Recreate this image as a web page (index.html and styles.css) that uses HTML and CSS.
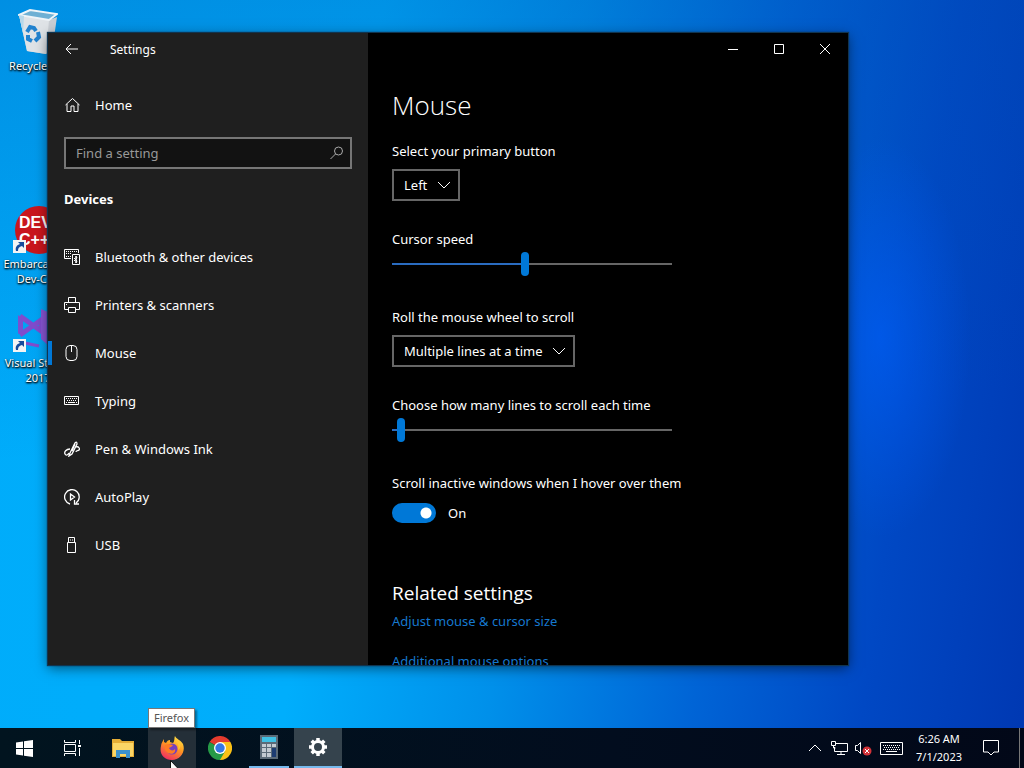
FILE: index.html
```html
<!DOCTYPE html>
<html lang="en">
<head>
<meta charset="utf-8">
<title>Settings</title>
<link rel="stylesheet" href="styles.css">
</head>
<body>
<div class="desktop">
  <div class="workspace">
    <a class="shortcut shortcut-bin" href="#bin">
      <svg width="40" height="46" viewBox="0 0 40 46"><path d="M1 7 9 43 28 46 34 43 39 9 31 12Z" fill="#c9ced4"/><path d="M1 7 31 12 28 46 9 43Z" fill="#dfe3e7"/><path d="M1 7 12 2 39 6 31 12Z" fill="#6eb0d4" stroke="#eef4f8" stroke-width="2"/><path d="m1 7 4 18 1-17Z" fill="#b8d8ea"/><g fill="none" stroke="#2182cf" stroke-width="4"><path d="m9 24 3-5 4 1 2 3M20 24l1 5-4 4M14 33l-4-2v-4"/></g></svg>
      <span>Recycle Bin</span>
    </a>
    <a class="shortcut shortcut-dev" href="#devcpp">
      <svg width="50" height="50" viewBox="0 0 50 50"><circle cx="26" cy="24" r="24" fill="#c9161d"/><text x="6" y="22" class="logo-text">DEV</text><text x="6" y="39" class="logo-text">C++</text><path d="M0 34h13v13H0z" fill="#f4f4f4"/><path d="M3 45c-1-4 1-6 4-7L5 36h6v6l-2-2c-3 1-4 2-4 5z" fill="#174a9c"/></svg>
      <span>Embarcadero Dev-C++</span>
    </a>
    <a class="shortcut shortcut-vs" href="#vs">
      <svg width="50" height="46" viewBox="0 0 50 46"><path d="m5 8 5 4v11l-5 4Z" fill="#7a4fd0"/><path d="m7 9 21 15V13L7 28" fill="none" stroke="#804ccc" stroke-width="5"/><path d="m28 2 9 4v34l-9-8z" fill="#8855d4"/><path d="m12 36 14 3" stroke="#804ccc" stroke-width="3"/><path d="M0 32h13v13H0z" fill="#f4f4f4"/><path d="M3 43c-1-4 1-6 4-7l-2-2h6v6l-2-2c-3 1-4 2-4 5z" fill="#174a9c"/></svg>
      <span>Visual Studio 2017</span>
    </a>

    <section class="window" aria-label="Settings">
      <aside class="sidebar">
        <header class="titlebar">
          <button class="back" aria-label="Back"><svg width="14" height="12" viewBox="0 0 14 12"><path d="M13 6H1.500M6 1 1 6l5 5" /></svg></button>
          <span class="title">Settings</span>
        </header>
        <a class="nav-item home" href="#home"><svg width="16" height="16" viewBox="0 0 16 16"><path d="m1.500 8 7-6.500 7 6.500M3 7v7.500h4V9h3v5.500h4V7"/></svg>Home</a>
        <div class="search">
          <input type="text" aria-label="Find a setting" placeholder="Find a setting">
          <svg width="14" height="14" viewBox="0 0 14 14"><circle cx="8.500" cy="5" r="4"/><path d="m5.500 8-5 5"/></svg>
        </div>
        <h2 class="group">Devices</h2>
        <nav>
          <a class="nav-item" href="#bluetooth"><svg width="16" height="16" viewBox="0 0 16 16"><path d="M7 9.500H.5v-9h14V4"/><path d="M2 2.500h11M2 4.500h6M2 7.500h5" stroke-dasharray="1 1"/><path d="M8.500 5.500h7v10h-7zM12 7v7m-2-5 3 3-1 2V7l1 2-3 3"/></svg>Bluetooth &amp; other devices</a>
          <a class="nav-item" href="#printers"><svg width="16" height="16" viewBox="0 0 16 16"><path d="M4.500 5.500v-5h7v5M4 12.500H.5v-7h15v7H12M4.500 10.500h7v5h-7zM2 7.500h1"/></svg>Printers &amp; scanners</a>
          <a class="nav-item active" href="#mouse" aria-current="page"><svg width="16" height="16" viewBox="0 0 16 16"><rect x="2" y=".5" width="11" height="15" rx="4"/><path d="M7.500 1v6"/></svg>Mouse</a>
          <a class="nav-item" href="#typing"><svg width="16" height="16" viewBox="0 0 16 16"><path d="M.5 3.500h14v8H.500z"/><path d="M2 5.500h11M3 7.500h10M2 9.500h2M12 9.500h1" stroke-dasharray="1 1"/><path d="M4 9.500h7"/></svg>Typing</a>
          <a class="nav-item" href="#pen"><svg width="16" height="16" viewBox="0 0 16 16"><path d="M6 12 11 2q2-2 2 1L8 13l-3 2zM8 10l3-7M6 8C2 8 0 11 1 13s3 1 4-1M12 6c3-1 4 2 3 3s-3 0-3 2" stroke-width="1.300"/></svg>Pen &amp; Windows Ink</a>
          <a class="nav-item" href="#autoplay"><svg width="16" height="16" viewBox="0 0 16 16"><path d="M6 15A7.300 7.300 0 1 1 12 14M10.500 11v4H15M6.500 5v6l4-3z" stroke-width="1.300"/></svg>AutoPlay</a>
          <a class="nav-item" href="#usb"><svg width="16" height="16" viewBox="0 0 16 16"><path d="M3.500 5.500h8v10h-8zM4.500 5V.5h6V5M6 3h1M8 3h1"/></svg>USB</a>
        </nav>
      </aside>

      <main class="page">
        <div class="captions">
          <button aria-label="Minimize"><svg width="10" height="10" viewBox="0 0 10 10"><path d="M0 5.500h10"/></svg></button>
          <button aria-label="Maximize"><svg width="10" height="10" viewBox="0 0 10 10"><path d="M.5.5h9v9H.500z"/></svg></button>
          <button aria-label="Close"><svg width="10" height="10" viewBox="0 0 10 10"><path d="m0 0 10 10M10 0 0 10"/></svg></button>
        </div>
        <div class="content">
          <h1>Mouse</h1>
          <div class="field">
            <label for="primary">Select your primary button</label>
            <div class="combo"><select id="primary"><option>Left</option></select><svg width="12" height="8" viewBox="0 0 12 8"><path d="m0 1 6 6 6-6"/></svg></div>
          </div>
          <div class="field">
            <label for="speed">Cursor speed</label>
            <input class="slider" id="speed" type="range" min="1" max="20" value="10" style="--fill:47%">
          </div>
          <div class="field">
            <label for="wheel">Roll the mouse wheel to scroll</label>
            <div class="combo"><select id="wheel"><option>Multiple lines at a time</option></select><svg width="12" height="8" viewBox="0 0 12 8"><path d="m0 1 6 6 6-6"/></svg></div>
          </div>
          <div class="field">
            <label for="lines">Choose how many lines to scroll each time</label>
            <input class="slider" id="lines" type="range" min="1" max="100" value="3" style="--fill:2%">
          </div>
          <div class="field">
            <label for="inactive">Scroll inactive windows when I hover over them</label>
            <div class="toggle-row"><input class="toggle" id="inactive" type="checkbox" role="switch" checked><span>On</span></div>
          </div>
          <h2 class="related">Related settings</h2>
          <div class="links">
            <a href="#size">Adjust mouse &amp; cursor size</a>
            <a href="#options">Additional mouse options</a>
          </div>
        </div>
      </main>
    </section>
  </div>

  <footer class="taskbar">
    <div class="apps">
      <button aria-label="Start"><svg width="17" height="17" viewBox="0 0 17 17" fill="#fff"><path d="m0 2.500 7-1V8H0zM8 1.300 17 0v8H8zM0 9h7v6.500l-7-1zM8 9h9v8l-9-1.300z"/></svg></button>
      <button class="task-view" aria-label="Task View"><svg width="17" height="16" viewBox="0 0 17 16" fill="none" stroke="#fff"><path d="M.5 0v2.500h11V0M.5 4.500h11v7H.500zM.5 16v-2.500h11V16M15.500 0v4M15.500 8v8"/><path d="M14 5h3v2h-3z" fill="#fff" stroke="none"/></svg></button>
      <button class="files" aria-label="File Explorer"><svg width="22" height="19" viewBox="0 0 22 19"><path d="M0 0h8l2 2h12v16H0z" fill="#e5ad36"/><path d="M1 4h20v13H1z" fill="#fbd666"/><path d="M4 11h14v8h-4v-4H8v4H4z" fill="#3c91cc"/></svg></button>
      <div class="hover-app">
        <button aria-label="Firefox" aria-describedby="tip"><svg width="24" height="24" viewBox="0 0 24 24"><defs><linearGradient id="fox" x1=".8" y1="0" x2=".3" y2="1"><stop stop-color="#ffe84a"/><stop offset=".45" stop-color="#ff9a20"/><stop offset="1" stop-color="#f12c62"/></linearGradient></defs><path d="M15 0c1 3 6 4 8 8 3 8-3 16-11 16S-1 18 1 10c0-3 2-5 3-7v3l2 1c1-2 2-3 4-3v2l3 1c2-2 1-5 2-7Z" fill="url(#fox)"/><circle cx="12" cy="13" r="5.500" fill="#7640bd"/><path d="M5 9c4-2 6 0 8 0-1 2-3 2-4 3 1 3 5 3 6 1 1 4-3 6-7 4-3-2-4-5-3-8Z" fill="#ff7c24"/><path d="M14 4c5 3 5 7 4 10 2-1 3-4 2-7-2-2-4-3-6-3Z" fill="#ffc632"/></svg></button>
        <span class="tooltip" id="tip" role="tooltip">Firefox</span>
        <svg class="pointer" width="12" height="19" viewBox="0 0 12 19"><path d="M.5.5v16l4-4 2.500 6 2-1-2.500-5.500h5z" fill="#fff" stroke="#111"/></svg>
      </div>
      <button aria-label="Chrome"><svg width="24" height="24" viewBox="0 0 24 24"><path d="M12 12 1.600 6a12 12 0 0 1 20.800 0Z" fill="#e33b2e"/><path d="M12 12V6h10.400A12 12 0 0 1 12 24Z" fill="#fbc116"/><path d="m12 12 5.200 3L12 24A12 12 0 0 1 1.600 6Z" fill="#269a47"/><circle cx="12" cy="12" r="6" fill="#fff"/><circle cx="12" cy="12" r="4.700" fill="#3578e5"/></svg></button>
      <button class="running" aria-label="Calculator"><svg width="18" height="24" viewBox="0 0 18 24"><path d="M0 0h18v24H0z" fill="#5b6b78"/><path d="M2 2h14v5H2z" fill="#3fc0e4"/><path d="M2 9h4v3H2zm5 0h4v3H7zm5 0h4v3h-4zM2 13h4v4H2zm5 0h4v4H7zM2 18h4v4H2zm5 0h4v4H7z" fill="#c3cbd2"/><path d="M12 13h4v9h-4z" fill="#1d3d72"/></svg></button>
      <button class="running current" aria-label="Settings"><svg width="20" height="20" viewBox="-10 -10 20 20"><circle r="5.500" fill="none" stroke="#fff" stroke-width="3"/><path d="M0-6v-3M0 6v3M-6 0h-3M6 0h3M4.300 4.300l2 2M-4.300-4.300l-2-2M4.300-4.300l2-2M-4.300 4.300l-2 2" stroke="#fff" stroke-width="3.500"/></svg></button>
    </div>
    <div class="tray">
      <button aria-label="Show hidden icons"><svg width="12" height="8" viewBox="0 0 12 8"><path d="m0 7 6-6 6 6"/></svg></button>
      <button aria-label="Network"><svg width="17" height="14" viewBox="0 0 17 14"><path d="M5 2.500h11.500v8H3.500V6M.5.5h4v4h-4zM2.500 5v2h2M6 13.500h8M10 11v2"/></svg></button>
      <button aria-label="Volume"><svg width="17" height="15" viewBox="0 0 17 15"><path d="M.5 4.500h2l3-3v11l-3-3h-2z"/><circle cx="12" cy="10" r="4.500" fill="#d23238" stroke="none"/><path d="m10 8 4 4m0-4-4 4"/></svg></button>
      <button class="keyboard" aria-label="Touch keyboard"><svg width="23" height="13" viewBox="0 0 23 13"><path d="M.5.5h22v12H.500z"/><path d="M3 3.500h17M4 5.500h16M3 7.500h17" stroke-dasharray="1 1"/><path d="M6 9.500h11"/></svg></button>
      <button class="clock"><span>6:26 AM</span><span>7/1/2023</span></button>
      <button class="notices" aria-label="Notifications"><svg width="16" height="16" viewBox="0 0 16 16"><path d="M.5.5h15v11.500H11l-3 3-3-3H.500z"/></svg></button>
    </div>
  </footer>
</div>
</body>
</html>
```
FILE: styles.css
```css
* { box-sizing: border-box; }

body {
  margin: 0;
  font: 13px/20px "Noto Sans", "Open Sans", sans-serif;
  color: #fff;
}

h1, h2 { margin: 0; }

button {
  display: flex;
  align-items: center;
  justify-content: center;
  padding: 0;
  border: 0;
  background: none;
  color: inherit;
  font: inherit;
}

a { text-decoration: none; }

.desktop {
  display: flex;
  flex-direction: column;
  height: 100vh;
  overflow: hidden;
  background:
    radial-gradient(ellipse 90px 200px at 86% 44%, #0060ff90 0%, #0060ff00 100%),
    linear-gradient(176deg, #0050b050 0%, #0050b000 55%),
    linear-gradient(98deg, #00acfa 0%, #00aefc 34%, #0090ea 52%, #0064d6 70%, #0048c4 85%, #0038b2 100%);
}

.workspace {
  position: relative;
  flex: 1;
}

/* Desktop shortcuts */
.shortcut {
  position: absolute;
  display: flex;
  flex-direction: column;
  align-items: center;
  width: 76px;
  color: #fff;
  font-size: 11px;
  line-height: 15px;
  text-align: center;
  text-shadow: 1px 1px 2px #000, 0 1px 2px #000;
}

.shortcut-bin { left: 0; top: 8px; gap: 4px; }
.shortcut-dev { left: 0; top: 206px; }
.shortcut-vs { left: 0; top: 307px; gap: 2px; }

.logo-text {
  fill: #fff;
  font: bold 16px/16px "Liberation Sans", sans-serif;
  text-shadow: none;
}

/* Settings window */
.window {
  position: absolute;
  left: 48px;
  top: 33px;
  display: grid;
  grid-template-columns: 2fr 3fr;
  width: 800px;
  height: 632px;
  overflow: hidden;
  background: #000;
  box-shadow: 0 0 1px 1px #103450, 0 3px 12px #0008;
}

.sidebar { background: #1f1f1f; }

.sidebar svg, .page svg, .tray svg {
  flex: none;
  fill: none;
  stroke: #fff;
}

.titlebar {
  display: flex;
  align-items: center;
  height: 32px;
  margin-bottom: 16px;
  font-size: 12px;
}

.back { width: 48px; height: 32px; }
.title { padding: 2px 0 0 14px; }

.nav-item {
  display: flex;
  align-items: center;
  gap: 15px;
  height: 48px;
  padding: 0 16px;
  color: #fff;
}

.nav-item.active {
  background: linear-gradient(#0078d7, #0078d7) left / 4px 24px no-repeat;
}

.search {
  display: flex;
  align-items: center;
  height: 32px;
  margin: 8px 16px 20px;
  padding-right: 6px;
  border: 2px solid #767676;
  background: #121212;
}

.search input {
  flex: 1;
  min-width: 0;
  padding: 0 10px;
  border: 0;
  outline: 0;
  background: none;
  color: #fff;
  font: inherit;
}

.search input::placeholder { color: #999; opacity: 1; }
.search svg { stroke: #aaa; }

.group {
  margin: 0 16px 24px;
  font-size: 13px;
  font-weight: 700;
  line-height: 20px;
}

.captions {
  display: flex;
  justify-content: flex-end;
}

.captions button { width: 46px; height: 32px; }

.content { padding: 20px 24px 0; }

.content h1 {
  margin-bottom: 16px;
  font-family: "Open Sans", "Noto Sans", sans-serif;
  font-size: 26px;
  font-weight: 300;
  line-height: 40px;
}

.field { margin-bottom: 28px; }

.field label { display: block; }

.combo {
  display: inline-grid;
  align-items: center;
  margin-top: 8px;
  vertical-align: top;
}

.combo select, .combo svg { grid-area: 1 / 1; }

.combo select {
  appearance: none;
  height: 32px;
  padding: 0 30px 0 10px;
  border: 2px solid #666;
  border-radius: 0;
  background: #000;
  color: #fff;
  font: inherit;
}

.combo svg {
  justify-self: end;
  margin-right: 10px;
  pointer-events: none;
}

.slider {
  appearance: none;
  display: block;
  width: 100%;
  max-width: 280px;
  height: 30px;
  margin: 0;
  background: linear-gradient(90deg, #2a6cc0 var(--fill), #666 var(--fill)) center / 100% 2px no-repeat;
}

.slider::-webkit-slider-thumb {
  appearance: none;
  width: 8px;
  height: 24px;
  border-radius: 4px;
  background: #0078d7;
}

.toggle-row {
  display: flex;
  align-items: center;
  gap: 12px;
  margin-top: 10px;
}

.toggle {
  appearance: none;
  width: 44px;
  height: 20px;
  margin: 0;
  border-radius: 10px;
  background: radial-gradient(circle at 34px 10px, #fff 5px, #0078d7 6px);
}

.related {
  margin: 56px 0 4px;
  font-family: "Open Sans", "Noto Sans", sans-serif;
  font-size: 19px;
  font-weight: 400;
  line-height: 28px;
}

.links {
  display: flex;
  flex-direction: column;
  align-items: flex-start;
  gap: 20px;
}

.links a { color: #1678cf; }

/* Taskbar */
.taskbar {
  display: flex;
  justify-content: space-between;
  height: 40px;
  background: linear-gradient(90deg, #01141f, #020d1e 60%, #020818);
}

.apps, .tray { display: flex; }

.apps button { width: 48px; height: 40px; }
.apps .files { margin: 0 1px 0 3px; }
.apps .running { width: 40px; margin: 0 5px; border-bottom: 2px solid #76b9ed; }
.apps .current { width: 48px; margin: 0; background: #35434d; }

.hover-app { position: relative; background: #242f38; }

.tooltip {
  position: absolute;
  left: 0;
  bottom: 40px;
  padding: 1px 5px;
  border: 1px solid #777;
  background: #fff;
  color: #555;
  font-size: 11px;
  line-height: 16px;
  box-shadow: 2px 2px 2px #0006;
}

.pointer {
  position: absolute;
  left: 22px;
  top: 32px;
}

.tray button { width: 24px; height: 40px; }
.tray .keyboard { width: 32px; }

.tray .clock {
  flex-direction: column;
  width: 64px;
  font-size: 11px;
  line-height: 18px;
}

.tray .notices {
  width: 49px;
  margin-right: 4px;
  padding-right: 8px;
  border-right: 1px solid #777;
}
```
